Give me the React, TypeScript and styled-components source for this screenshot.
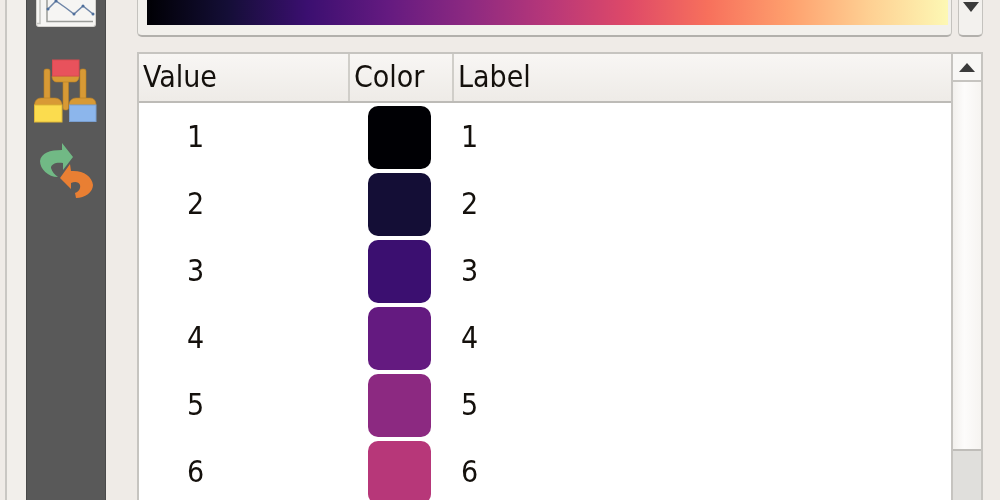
import React from "react";
import styled, { createGlobalStyle } from "styled-components";

const Global = createGlobalStyle`
  html, body { margin: 0; padding: 0; background: #efebe7; overflow: hidden; }
  #root { width: 1000px; height: 500px; overflow: hidden; }
`;

const Page = styled.div`
  display: flex;
  width: 1000px;
  height: 500px;
  overflow: hidden;
  background: #efebe7;
  font-family: "DejaVu Sans", sans-serif;
  font-stretch: condensed;
  color: #14100c;
  filter: blur(0.45px);
`;

const Gutter = styled.div`
  box-sizing: border-box;
  width: 26px;
  flex: none;
  margin-left: 5px;
  margin-right: -5px;
  border-left: 2px solid #c9c7c3;
  background: #f2efeb;
`;

const Sidebar = styled.div`
  box-sizing: border-box;
  width: 80px;
  flex: none;
  display: flex;
  flex-direction: column;
  align-items: center;
  background: #595959;
  border-left: 1px solid #484848;
  border-right: 1px solid #4a4a4a;
`;

const ChartTile = styled.div`
  box-sizing: border-box;
  width: 60px;
  height: 27px;
  margin-left: -1px;
  background: #f6f5f3;
  border: 1px solid #d4d2ce;
  border-top: none;
  border-radius: 0 0 3px 3px;
`;

const HierarchyIcon = styled.svg`
  display: block;
  width: 63px;
  height: 64px;
  margin-top: 32px;
  margin-left: -1px;
`;

const SwapIcon = styled.svg`
  display: block;
  width: 56px;
  height: 57px;
  margin-top: 19px;
`;

const Main = styled.div`
  flex: 1;
  min-width: 0;
  display: flex;
  flex-direction: column;
  gap: 15px;
  padding: 0 17px 0 31px;
`;

const RampRow = styled.div`
  display: flex;
  gap: 6px;
  height: 37px;
  flex: none;
`;

const RampFrame = styled.div`
  box-sizing: border-box;
  flex: 1;
  padding: 0 3px 10px 9px;
  background: #f2f0ec;
  border: 1px solid #c4c2be;
  border-top: none;
  border-bottom: 2px solid #b2b0ac;
  border-radius: 0 0 5px 5px;
`;

const Ramp = styled.div`
  height: 100%;
  background: linear-gradient(
    to right,
    #000004 0%,
    #140e36 10%,
    #3b0f70 20%,
    #641a80 30%,
    #8c2981 40%,
    #b73779 50%,
    #de4968 60%,
    #f7705c 70%,
    #fe9f6d 80%,
    #fecf92 90%,
    #fdf8b4 100%
  );
`;

const ComboButton = styled.div`
  box-sizing: border-box;
  width: 25px;
  flex: none;
  display: flex;
  justify-content: center;
  padding-top: 2px;
  background: #f3f1ee;
  border: 1px solid #c4c2be;
  border-top: none;
  border-bottom: 2px solid #b2b0ac;
  border-radius: 0 0 5px 5px;
`;

const Arrow = styled.div<{ $up?: boolean }>`
  width: 0;
  height: 0;
  border-left: 8px solid transparent;
  border-right: 8px solid transparent;
  ${(p) =>
    p.$up
      ? "border-bottom: 9px solid #3a3a3a;"
      : "border-top: 10px solid #3a3a3a;"}
`;

const TableFrame = styled.div`
  box-sizing: border-box;
  flex: 1;
  min-height: 0;
  display: flex;
  border: 2px solid #c6c4c0;
  border-bottom: none;
  background: #fff;
`;

const TableBody = styled.div`
  flex: 1;
  min-width: 0;
`;

const Header = styled.div`
  box-sizing: border-box;
  height: 49px;
  display: grid;
  grid-template-columns: 209px 104px 1fr;
  background: linear-gradient(to bottom, #f8f6f4, #eeebe7);
  border-bottom: 2px solid #bdbbb7;
`;

const HeaderCell = styled.div`
  box-sizing: border-box;
  padding: 0 0 0 4px;
  font-size: 30px;
  line-height: 46px;
  & + & {
    border-left: 2px solid #d0cec9;
  }
`;

const Rows = styled.div`
  padding-top: 3px;
`;

const Row = styled.div`
  display: grid;
  grid-template-columns: 209px 104px 1fr;
  height: 67px;
  font-size: 30px;
  line-height: 62px;
`;

const ValueCell = styled.div`
  text-align: center;
  padding-right: 96px;
`;

const ColorCell = styled.div`
  padding-left: 20px;
`;

const Swatch = styled.div<{ $color: string }>`
  width: 63px;
  height: 63px;
  border-radius: 10px;
  background: ${(p) => p.$color};
`;

const LabelCell = styled.div`
  padding-left: 9px;
`;

const Scrollbar = styled.div`
  box-sizing: border-box;
  width: 30px;
  flex: none;
  display: flex;
  flex-direction: column;
  border-left: 2px solid #c6c4c0;
  background: #f6f5f3;
`;

const ScrollButton = styled.div`
  box-sizing: border-box;
  height: 28px;
  flex: none;
  display: flex;
  justify-content: center;
  padding-top: 9px;
  background: #f8f7f5;
  border-bottom: 2px solid #c6c4c0;
`;

const ScrollTrack = styled.div`
  box-sizing: border-box;
  height: 369px;
  flex: none;
  background: linear-gradient(to right, #f2f0ed, #fdfcfb 40%, #f6f4f1);
  border-bottom: 2px solid #bfbdb9;
`;

const ScrollThumb = styled.div`
  flex: 1;
  background: #e0dfdc;
`;

const rows: [number, string][] = [
  [1, "#000004"],
  [2, "#140e36"],
  [3, "#3b0f70"],
  [4, "#641a80"],
  [5, "#8c2981"],
  [6, "#b73779"],
];

export default function App() {
  return (
    <Page>
      <Global />
      <Gutter />
      <Sidebar>
        <ChartTile>
          <svg width="58" height="26" viewBox="0 0 58 26" style={{ display: "block" }}>
            <path d="M0 23.5H3V0" fill="none" stroke="#c4c4c0" strokeWidth="1.5" />
            <path d="M10 0V21.5H56" fill="none" stroke="#9a9c98" strokeWidth="1.5" />
            <path
              d="M11 9L19 1L29 8L37 14L46 6L56 14"
              fill="none"
              stroke="#6f86a8"
              strokeWidth="1.5"
            />
            <g fill="#4f6f9c">
              <circle cx="11" cy="9" r="1.5" />
              <circle cx="19" cy="1" r="1.5" />
              <circle cx="37" cy="14" r="1.5" />
              <circle cx="46" cy="6" r="1.5" />
              <circle cx="56" cy="14" r="1.5" />
            </g>
          </svg>
        </ChartTile>
        <HierarchyIcon viewBox="0 0 63 64">
          <g fill="#d89a35" stroke="#b97f24" strokeWidth="0.6">
            <rect x="10" y="10" width="6" height="32" rx="2" />
            <rect x="46" y="10" width="6" height="32" rx="2" />
            <rect x="29" y="20" width="5.5" height="31" rx="2" />
            <path d="M18 17H45C45 21 43 23 40 23H23C20 23 18 21 18 17Z" />
            <path d="M0.5 46C0.5 42 3 39 7 39H21C25 39 28 42 28 46Z" />
            <path d="M35 46C35 42 38 39 42 39H56C60 39 62 42 62 46Z" />
          </g>
          <rect x="18.5" y="1" width="26.5" height="16" fill="#e8525c" stroke="#d84a50" />
          <rect x="0.5" y="46" width="27.5" height="17" fill="#fbdc4e" stroke="#e0b838" />
          <rect x="35.5" y="46" width="26.5" height="16.5" fill="#8cb6ec" stroke="#7a9fd0" />
        </HierarchyIcon>
        <SwapIcon viewBox="0 0 56 57">
          <path
            d="M24 1L35 15L25 28V21C18 20 13 22 13 26C14 30 17 33 20 35C10 35 2 27 2 19C3 11 12 8 24 8Z"
            fill="#71b985"
          />
          <path
            d="M32 22L22 36L33 47V41C37 39 41 40 42 43C43 47 40 50 37 51L38 56C47 56 55 50 55 43C54 34 45 28 33 29Z"
            fill="#e97f33"
          />
        </SwapIcon>
      </Sidebar>
      <Main>
        <RampRow>
          <RampFrame>
            <Ramp />
          </RampFrame>
          <ComboButton>
            <Arrow />
          </ComboButton>
        </RampRow>
        <TableFrame>
          <TableBody>
            <Header>
              <HeaderCell>Value</HeaderCell>
              <HeaderCell>Color</HeaderCell>
              <HeaderCell>Label</HeaderCell>
            </Header>
            <Rows>
              {rows.map(([n, color]) => (
                <Row key={n}>
                  <ValueCell>{n}</ValueCell>
                  <ColorCell>
                    <Swatch $color={color} />
                  </ColorCell>
                  <LabelCell>{n}</LabelCell>
                </Row>
              ))}
            </Rows>
          </TableBody>
          <Scrollbar>
            <ScrollButton>
              <Arrow $up />
            </ScrollButton>
            <ScrollTrack />
            <ScrollThumb />
          </Scrollbar>
        </TableFrame>
      </Main>
    </Page>
  );
}
